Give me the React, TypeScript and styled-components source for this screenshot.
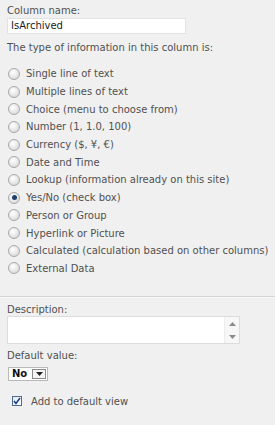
import * as React from 'react';
import styled, { createGlobalStyle } from 'styled-components';

const GlobalStyle = createGlobalStyle`
  html, body {
    margin: 0;
    padding: 0;
    background: #f0f0f0;
  }
  body {
    font-family: "DejaVu Sans", Verdana, sans-serif;
    font-size: 10px;
    color: #505050;
  }
`

const Page = styled.div`
  width: 275px;
  height: 425px;
  background: #f0f0f0;
  overflow: hidden;
`

const TopSection = styled.div`
  padding: 4px 0 0 7px;
`

const FieldLabel = styled.div<{ $gap?: number }>`
  line-height: 14px;
  height: 14px;
  margin-top: ${p => p.$gap || 0}px;
  white-space: nowrap;
`

const NameInput = styled.div`
  box-sizing: border-box;
  width: 179px;
  height: 16px;
  background: #fff;
  border: 1px solid #e2e2e2;
  padding: 0 3px;
  line-height: 14px;
  color: #1a1a1a;
  font-weight: 500;
`

const OptionList = styled.div`
  margin-top: 10px;
  display: flex;
  flex-direction: column;
`

const OptionRow = styled.label`
  display: flex;
  align-items: center;
  height: 17.7px;
  white-space: nowrap;
`

const Radio = styled.span<{ $checked?: boolean }>`
  box-sizing: border-box;
  flex-shrink: 0;
  width: 12px;
  height: 12px;
  border-radius: 50%;
  margin: 0 6px 0 1px;
  border: 1px solid #a8a8a8;
  background: radial-gradient(circle at 40% 35%, #ffffff 0%, #e6e6e6 55%, #cfcfcf 100%);
  display: flex;
  align-items: center;
  justify-content: center;
  &::after {
    content: '';
    display: ${p => (p.$checked ? 'block' : 'none')};
    width: 5px;
    height: 5px;
    border-radius: 50%;
    background: #1f3f6e;
  }
`

const Divider = styled.div`
  margin-top: 19px;
  height: 1px;
  background: #d4d4d4;
  border-bottom: 1px solid #f8f8f8;
`

const BottomSection = styled.div`
  padding: 6px 0 0 7px;
`

const SmallLabel = styled.div<{ $gap?: number }>`
  line-height: 11px;
  height: 11px;
  margin-top: ${p => p.$gap || 0}px;
  white-space: nowrap;
`

const DescriptionBox = styled.div`
  box-sizing: border-box;
  margin-top: 1px;
  width: 233px;
  height: 28px;
  background: #fff;
  border: 1px solid #dcdcdc;
  display: flex;
  justify-content: flex-end;
`

const ScrollColumn = styled.div`
  width: 14px;
  display: flex;
  flex-direction: column;
  justify-content: space-between;
  align-items: center;
  padding: 5px 0 4px;
  background: #f7f7f7;
  border-left: 1px solid #ececec;
`

const SelectBox = styled.div`
  box-sizing: border-box;
  margin: 6px 0 0 1px;
  width: 40px;
  height: 14px;
  background: #fff;
  border: 1px solid #b9b9b9;
  display: flex;
  align-items: center;
  justify-content: space-between;
  padding: 0 1px 0 3px;
  font-weight: bold;
  color: #111;
  line-height: 12px;
`

const DropButton = styled.span`
  box-sizing: border-box;
  width: 14px;
  height: 10px;
  border: 1px solid #8a8a8a;
  background: #f4f4f4;
  display: flex;
  align-items: center;
  justify-content: center;
`

const CheckRow = styled.label`
  display: flex;
  align-items: center;
  margin: 14px 0 0 5px;
  height: 12px;
  white-space: nowrap;
`

const CheckBox = styled.span`
  box-sizing: border-box;
  flex-shrink: 0;
  width: 10px;
  height: 10px;
  border: 1px solid #4b6d95;
  background: linear-gradient(135deg, #e4e8ee, #ffffff);
  margin-right: 9px;
  display: flex;
  align-items: center;
  justify-content: center;
`

const options = [
  'Single line of text',
  'Multiple lines of text',
  'Choice (menu to choose from)',
  'Number (1, 1.0, 100)',
  'Currency ($, ¥, €)',
  'Date and Time',
  'Lookup (information already on this site)',
  'Yes/No (check box)',
  'Person or Group',
  'Hyperlink or Picture',
  'Calculated (calculation based on other columns)',
  'External Data',
]

const Arrow = ({ up }: { up?: boolean }) => (
  <svg width="7" height="4" viewBox="0 0 7 4">
    <path d={up ? 'M0 4 L3.5 0 L7 4 Z' : 'M0 0 L3.5 4 L7 0 Z'} fill="#8a8a8a" />
  </svg>
)

export default function App() {
  const selected = 'Yes/No (check box)'
  return (
    <Page>
      <GlobalStyle />
      <TopSection>
        <FieldLabel>Column name:</FieldLabel>
        <NameInput>IsArchived</NameInput>
        <FieldLabel $gap={7}>The type of information in this column is:</FieldLabel>
        <OptionList>
          {options.map(o => (
            <OptionRow key={o}>
              <Radio $checked={o === selected} />
              {o}
            </OptionRow>
          ))}
        </OptionList>
      </TopSection>
      <Divider />
      <BottomSection>
        <SmallLabel>Description:</SmallLabel>
        <DescriptionBox>
          <ScrollColumn>
            <Arrow up />
            <Arrow />
          </ScrollColumn>
        </DescriptionBox>
        <SmallLabel $gap={6}>Default value:</SmallLabel>
        <SelectBox>
          No
          <DropButton>
            <svg width="7" height="4" viewBox="0 0 7 4">
              <path d="M0 0 L3.5 4 L7 0 Z" fill="#222" />
            </svg>
          </DropButton>
        </SelectBox>
        <CheckRow>
          <CheckBox>
            <svg width="8" height="8" viewBox="0 0 8 8">
              <path d="M1 4 L3 6.5 L7 1" stroke="#1d3f8a" strokeWidth="1.6" fill="none" />
            </svg>
          </CheckBox>
          Add to default view
        </CheckRow>
      </BottomSection>
    </Page>
  )
}
